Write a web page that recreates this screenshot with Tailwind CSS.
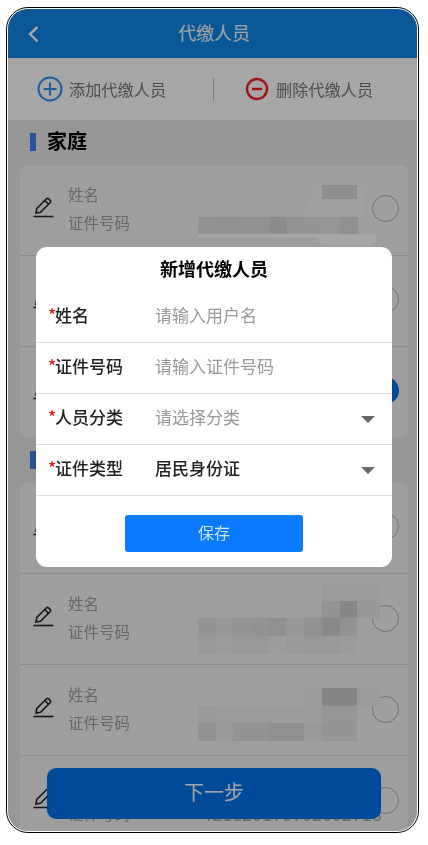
<!DOCTYPE html>
<html lang="zh-CN">
<head>
<meta charset="utf-8">
<title>代缴人员</title>
<script src="https://cdn.jsdelivr.net/npm/@tailwindcss/browser@4"></script>
</head>
<body class="bg-white font-['Noto_Sans_CJK_SC','Noto_Sans',sans-serif] overflow-hidden">
<div class="w-[428px] h-[845px] pt-[7px] pl-[6px]">
  <div class="w-[413px] h-[826px] border border-black rounded-[22px] p-px bg-white">
  <div class="relative h-full rounded-[20px] overflow-hidden bg-[#e6e6e6] blur-[0.4px]">

    <!-- page -->
    <header class="relative h-[49px] bg-[#0f86e8] flex items-center justify-center text-white text-[18px]">
      <svg class="absolute left-[19px] top-[16px]" width="13" height="18" viewBox="0 0 13 18" fill="none" stroke="white" stroke-width="2.4"><path d="M10.5 2 L3 9 L10.5 16.5"/></svg>
      <span class="ml-[3px] mb-[3px]">代缴人员</span>
    </header>

    <div class="h-[62px] bg-white flex items-center text-[16.2px] text-[#777]">
      <div class="w-[205px] flex items-center pl-[29px] gap-[6px]">
        <svg width="26" height="26" viewBox="0 0 26 26" fill="none" stroke="#2890f5" stroke-width="2"><circle cx="13" cy="13" r="11.5"/><path d="M13 6.5V19.5M6.5 13H19.5"/></svg>
        <span>添加代缴人员</span>
      </div>
      <div class="w-px h-[23px] bg-[#c0c0c0]"></div>
      <div class="flex-1 flex items-center pl-[31px] gap-[7px]">
        <svg width="24" height="24" viewBox="0 0 24 24" fill="none" stroke="#f82020" stroke-width="2.4"><circle cx="12" cy="12" r="10"/><path d="M7 12H17"/></svg>
        <span>删除代缴人员</span>
      </div>
    </div>

    <div class="h-[45px] flex items-center pl-[22px] gap-[11px]">
      <div class="w-[6px] h-[18px] mt-[-2px] bg-[#3a80e8]"></div>
      <span class="text-[20px] font-bold leading-[26px] mt-[-4px] text-black">家庭</span>
    </div>

    <div class="ml-[12px] w-[388px] rounded-[8px] bg-[#f3f3f3]">
      <div class="relative h-[91px] border-b border-[#d8d8d8]">
        <svg class="absolute left-[13px] top-[31px]" width="21" height="22" viewBox="0 0 21 22" fill="none" stroke="#222" stroke-width="1.6"><path d="M3 17 L3.8 12.5 L13.5 2.8 Q14.5 1.9 15.5 2.8 L17.3 4.6 Q18.2 5.6 17.3 6.5 L7.5 16.2 Z M11.8 4.5 L15.6 8.3"/><path d="M0.5 20.5H20.5"/></svg>
        <span class="absolute left-[48px] top-[18px] text-[15.5px] leading-[22px] text-[#a0a0a0]">姓名</span>
        <span class="absolute left-[48px] top-[46px] text-[15.5px] leading-[22px] text-[#a0a0a0]">证件号码</span>
        <div class="absolute left-[352px] top-[30px] w-[27px] h-[27px] rounded-full border border-[#aaa]"></div>
        <div class="absolute left-[285px] top-[19px] w-[60px] h-[33px] rounded-tr-[14px] rounded-tl-[30px] bg-[#f6f6f6]"></div>
        <div class="absolute left-[302px] top-[20px] w-[35px] h-[14px] bg-[#dbdbdb]"></div>
        <div class="absolute left-[178px] top-[52px] w-[160px] h-[17px] grid grid-cols-[repeat(9,1fr)]">
          <div class="bg-[#e0e0e0]"></div><div class="bg-[#dedede]"></div><div class="bg-[#e0e0e0]"></div><div class="bg-[#e0e0e0]"></div><div class="bg-[#d8d8d8]"></div><div class="bg-[#e4e4e4]"></div><div class="bg-[#e4e4e4]"></div><div class="bg-[#e6e6e6]"></div><div class="bg-[#dedede]"></div>
        </div>
        <div class="absolute left-[178px] top-[69px] w-[160px] h-[3px] bg-white"></div>
        <div class="absolute left-[296px] top-[70px] w-[60px] h-[10px] rounded-bl-[24px] rounded-br-[14px] bg-white"></div>
      </div>
      <div class="relative h-[91px] border-b border-[#d8d8d8]">
        <svg class="absolute left-[13px] top-[31px]" width="21" height="22" viewBox="0 0 21 22" fill="none" stroke="#222" stroke-width="1.6"><path d="M3 17 L3.8 12.5 L13.5 2.8 Q14.5 1.9 15.5 2.8 L17.3 4.6 Q18.2 5.6 17.3 6.5 L7.5 16.2 Z"/><path d="M0.5 20.5H20.5"/></svg>
        <div class="absolute left-[352px] top-[30px] w-[27px] h-[27px] rounded-full border border-[#aaa]"></div>
      </div>
      <div class="relative h-[90px]">
        <svg class="absolute left-[13px] top-[31px]" width="21" height="22" viewBox="0 0 21 22" fill="none" stroke="#222" stroke-width="1.6"><path d="M3 17 L3.8 12.5 L13.5 2.8 Q14.5 1.9 15.5 2.8 L17.3 4.6 Q18.2 5.6 17.3 6.5 L7.5 16.2 Z"/><path d="M0.5 20.5H20.5"/></svg>
        <div class="absolute left-[352px] top-[30px] w-[27px] h-[27px] rounded-full bg-[#0072ed]"></div>
      </div>
    </div>

    <div class="h-[46px] flex items-center pl-[22px]">
      <div class="w-[6px] h-[18px] bg-[#3a80e8]"></div>
    </div>

    <div class="ml-[12px] w-[388px] rounded-t-[8px] bg-[#f3f3f3]">
      <div class="relative h-[91px] border-b border-[#d8d8d8]">
        <svg class="absolute left-[13px] top-[31px]" width="21" height="22" viewBox="0 0 21 22" fill="none" stroke="#222" stroke-width="1.6"><path d="M3 17 L3.8 12.5 L13.5 2.8 Q14.5 1.9 15.5 2.8 L17.3 4.6 Q18.2 5.6 17.3 6.5 L7.5 16.2 Z"/><path d="M0.5 20.5H20.5"/></svg>
        <div class="absolute left-[352px] top-[30px] w-[27px] h-[27px] rounded-full border border-[#aaa]"></div>
      </div>

      <div class="relative h-[91px] border-b border-[#d8d8d8]">
        <svg class="absolute left-[13px] top-[31px]" width="21" height="22" viewBox="0 0 21 22" fill="none" stroke="#222" stroke-width="1.6"><path d="M3 17 L3.8 12.5 L13.5 2.8 Q14.5 1.9 15.5 2.8 L17.3 4.6 Q18.2 5.6 17.3 6.5 L7.5 16.2 Z M11.8 4.5 L15.6 8.3"/><path d="M0.5 20.5H20.5"/></svg>
        <span class="absolute left-[48px] top-[18px] text-[15.5px] leading-[22px] text-[#a0a0a0]">姓名</span>
        <span class="absolute left-[48px] top-[46px] text-[15.5px] leading-[22px] text-[#a0a0a0]">证件号码</span>
        <div class="absolute left-[352px] top-[31px] w-[27px] h-[27px] rounded-full border border-[#aaa]"></div>
        <div class="absolute left-[178px] top-[9px] grid grid-cols-[repeat(9,17.7px)_23px] auto-rows-[17.7px]">
          <div></div><div></div><div></div><div></div><div></div><div></div><div></div><div class="bg-[#eeeeee]"></div><div class="bg-[#eeeeee]"></div><div class="bg-[#eeeeee]"></div>
          <div></div><div></div><div></div><div></div><div></div><div></div><div></div><div class="bg-[#e2e2e2]"></div><div class="bg-[#d0d0d0]"></div><div class="bg-[#e8e8e8]"></div>
          <div class="bg-[#e2e2e2]"></div><div class="bg-[#e6e6e6]"></div><div class="bg-[#e4e4e4]"></div><div class="bg-[#e0e0e0]"></div><div class="bg-[#dcdcdc]"></div><div class="bg-[#e8e8e8]"></div><div class="bg-[#e0e0e0]"></div><div class="bg-[#d4d4d4]"></div><div class="bg-[#e2e2e2]"></div><div></div>
          <div class="bg-[#eaeaea]"></div><div class="bg-[#eeeeee]"></div><div class="bg-[#eaeaea]"></div><div class="bg-[#eaeaea]"></div><div class="bg-[#f0f0f0]"></div><div class="bg-[#ececec]"></div><div class="bg-[#eaeaea]"></div><div class="bg-[#eaeaea]"></div><div class="bg-[#eeeeee]"></div><div></div>
        </div>
      </div>

      <div class="relative h-[91px] border-b border-[#d8d8d8]">
        <svg class="absolute left-[13px] top-[31px]" width="21" height="22" viewBox="0 0 21 22" fill="none" stroke="#222" stroke-width="1.6"><path d="M3 17 L3.8 12.5 L13.5 2.8 Q14.5 1.9 15.5 2.8 L17.3 4.6 Q18.2 5.6 17.3 6.5 L7.5 16.2 Z M11.8 4.5 L15.6 8.3"/><path d="M0.5 20.5H20.5"/></svg>
        <span class="absolute left-[48px] top-[18px] text-[15.5px] leading-[22px] text-[#a0a0a0]">姓名</span>
        <span class="absolute left-[48px] top-[46px] text-[15.5px] leading-[22px] text-[#a0a0a0]">证件号码</span>
        <div class="absolute left-[352px] top-[31px] w-[27px] h-[27px] rounded-full border border-[#aaa]"></div>
        <div class="absolute left-[178px] top-[23px] grid grid-cols-[repeat(9,17.7px)_23px] auto-rows-[17.7px]">
          <div></div><div></div><div></div><div></div><div></div><div></div><div class="bg-[#eeeeee]"></div><div class="bg-[#cccccc]"></div><div class="bg-[#cccccc]"></div><div class="bg-[#eeeeee]"></div>
          <div class="bg-[#ececec]"></div><div class="bg-[#ededed]"></div><div class="bg-[#ededed]"></div><div class="bg-[#ededed]"></div><div class="bg-[#ededed]"></div><div class="bg-[#ededed]"></div><div class="bg-[#efefef]"></div><div class="bg-[#e6e6e6]"></div><div class="bg-[#e6e6e6]"></div><div></div>
          <div class="bg-[#e0e0e0]"></div><div class="bg-[#eaeaea]"></div><div class="bg-[#e2e2e2]"></div><div class="bg-[#e2e2e2]"></div><div class="bg-[#dcdcdc]"></div><div class="bg-[#dcdcdc]"></div><div class="bg-[#eaeaea]"></div><div class="bg-[#e4e4e4]"></div><div class="bg-[#e4e4e4]"></div><div></div>
        </div>
      </div>

      <div class="relative h-[91px]">
        <svg class="absolute left-[13px] top-[31px]" width="21" height="22" viewBox="0 0 21 22" fill="none" stroke="#222" stroke-width="1.6"><path d="M3 17 L3.8 12.5 L13.5 2.8 Q14.5 1.9 15.5 2.8 L17.3 4.6 Q18.2 5.6 17.3 6.5 L7.5 16.2 Z"/><path d="M0.5 20.5H20.5"/></svg>
        <span class="absolute left-[48px] top-[46px] text-[15.5px] leading-[22px] text-[#a0a0a0]">证件号码</span>
        <span class="absolute left-[182px] top-[46px] text-[18px] leading-[22px] text-[#a0a0a0] whitespace-nowrap">421120170702002718</span>
        <div class="absolute left-[352px] top-[31px] w-[27px] h-[27px] rounded-full border border-[#aaa]"></div>
      </div>
    </div>

    <!-- next button, under the scrim -->
    <button class="absolute left-[39px] top-[759px] w-[334px] h-[51px] pb-[3px] rounded-[9px] bg-[#0072ed] text-white text-[20px]">下一步</button>

    <!-- scrim -->
    <div class="absolute inset-0 bg-black/35"></div>

    <!-- dialog -->
    <div class="absolute left-[28px] top-[238px] w-[356px] h-[320px] rounded-[11px] bg-white">
      <h2 class="h-[45px] pb-[2px] flex items-center justify-center text-[18px] font-bold text-black">新增代缴人员</h2>
      <div class="h-[51px] flex items-center pl-[12px] pb-[5px] border-b border-[#e0e0e0] text-[17px]">
        <span class="w-[107px] font-medium text-[#222]"><span class="inline-block w-[7px] text-[#f01010]">*</span>姓名</span>
        <span class="text-[#999]">请输入用户名</span>
      </div>
      <div class="h-[51px] flex items-center pl-[12px] pb-[5px] border-b border-[#e0e0e0] text-[17px]">
        <span class="w-[107px] font-medium text-[#222]"><span class="inline-block w-[7px] text-[#f01010]">*</span>证件号码</span>
        <span class="text-[#999]">请输入证件号码</span>
      </div>
      <div class="h-[51px] flex items-center pl-[12px] pr-[17px] pb-[5px] border-b border-[#e0e0e0] text-[17px]">
        <span class="w-[107px] font-medium text-[#222]"><span class="inline-block w-[7px] text-[#f01010]">*</span>人员分类</span>
        <span class="flex-1 text-[#999]">请选择分类</span>
        <div class="w-0 h-0 mt-[6px] border-x-[7px] border-x-transparent border-t-[7px] border-t-[#666]"></div>
      </div>
      <div class="h-[51px] flex items-center pl-[12px] pr-[17px] pb-[5px] border-b border-[#e0e0e0] text-[17px]">
        <span class="w-[107px] font-medium text-[#222]"><span class="inline-block w-[7px] text-[#f01010]">*</span>证件类型</span>
        <span class="flex-1 font-medium text-[#222]">居民身份证</span>
        <div class="w-0 h-0 mt-[6px] border-x-[7px] border-x-transparent border-t-[7px] border-t-[#666]"></div>
      </div>
      <div class="flex justify-center pt-[19px]">
        <button class="w-[178px] h-[37px] pb-[4px] rounded-[3px] bg-[#0a7bff] text-white/80 text-[16px]">保存</button>
      </div>
    </div>
  </div>
  </div>
</div>
</body>
</html>
